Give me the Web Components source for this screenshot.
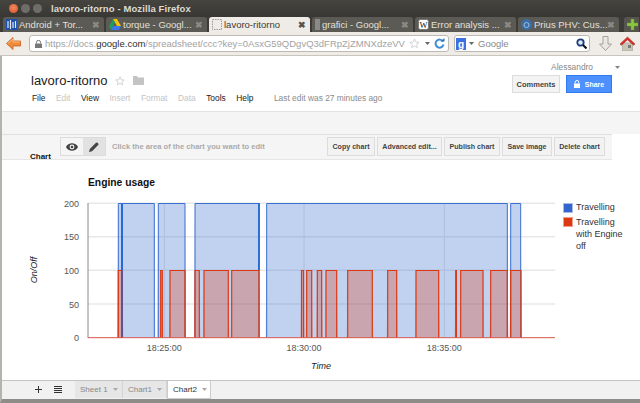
<!DOCTYPE html>
<html>
<head>
<meta charset="utf-8">
<title>lavoro-ritorno</title>
<style>
  html, body { margin: 0; padding: 0; width: 640px; height: 403px; overflow: hidden; background: #fff; font-family: "Liberation Sans", Arial, sans-serif; }
  body { display: flex; flex-direction: column; }
</style>
</head>
<body>
<window-title>lavoro-ritorno - Mozilla Firefox</window-title>
<tab-strip>
  <browser-tab label="Android + Tor...">
    <svg slot="icon" width="11" height="11" viewBox="0 0 11 11"><rect width="11" height="11" fill="#1d4fa8"/><path d="M2 2v7M4.500 1v9M7 3v6M9.500 2v7" stroke="#dfeaf8" stroke-width="1.200"/></svg>
  </browser-tab>
  <browser-tab label="torque - Googl...">
    <svg slot="icon" width="12" height="11" viewBox="0 0 12 11"><path d="M4 0h4l4 7H8z" fill="#f4c20d"/><path d="M4 0l2 3.600L2 11 0 7z" fill="#1f9e5a"/><path d="M4 7h8l-2 4H2z" fill="#3b78e7"/></svg>
  </browser-tab>
  <browser-tab active label="lavoro-ritorno">
    <svg slot="icon" width="10" height="11" viewBox="0 0 10 11"><rect x=".5" y=".5" width="9" height="10" fill="none" stroke="#999" stroke-dasharray="1.500 1"/></svg>
  </browser-tab>
  <browser-tab label="grafici - Googl...">
    <svg slot="icon" width="5" height="11" viewBox="0 0 5 11"><rect width="5" height="11" fill="#8a8a86"/></svg>
  </browser-tab>
  <browser-tab label="Error analysis ...">
    <svg slot="icon" width="11" height="11" viewBox="0 0 11 11"><rect x=".5" y=".5" width="10" height="10" rx="2" fill="#fff" stroke="#777"/><text x="5.500" y="8.500" font-family="Liberation Serif, serif" font-size="8.500" text-anchor="middle" fill="#111">W</text></svg>
  </browser-tab>
  <browser-tab label="Prius PHV: Cus...">
    <svg slot="icon" width="11" height="11" viewBox="0 0 11 11"><circle cx="5.500" cy="5.500" r="5.500" fill="#3b6ea5"/><circle cx="5.500" cy="6" r="2.500" fill="none" stroke="#9cc0e4"/></svg>
  </browser-tab>
  <svg class="plus" slot="plus" width="11" height="11" viewBox="0 0 11 11"><path d="M4 0h3v4h4v3H7v4H4V7H0V4h4z" fill="#8cc63f" stroke="#6a9a2c" stroke-width=".5"/></svg>
</tab-strip>
<nav-bar></nav-bar>
<doc-page>
  <doc-header></doc-header>
  <grey-band></grey-band>
  <chart-toolbar></chart-toolbar>
  <chart-view></chart-view>
  <sheet-bar></sheet-bar>
</doc-page>
<script>
class WindowTitle extends HTMLElement {
  constructor() {
    super();
    this.attachShadow({mode: 'open'}).innerHTML = `
      <style>
        :host { display: flex; align-items: center; height: 17px; flex: none; background: linear-gradient(#45443f, #383733); color: #dfdbd2; font: bold 8.500px "Liberation Sans", sans-serif; padding-left: 9px; }
        .b { width: 9px; height: 9px; border-radius: 50%; margin-right: 3px; background: #6e6d68; }
        .b.x { background: radial-gradient(circle at 50% 40%, #f08a5a, #d9512c); }
        .t { margin-left: 6px; font-size: 9.500px; letter-spacing: .1px; }
      </style>
      <span class="b x"></span><span class="b"></span><span class="b"></span>
      <span class="t"><slot></slot></span>`;
  }
}

class TabStrip extends HTMLElement {
  constructor() {
    super();
    this.attachShadow({mode: 'open'}).innerHTML = `
      <style>
        :host { display: flex; align-items: flex-end; gap: 2px; height: 15px; flex: none; background: #3c3b37; padding-left: 3px; position: relative; }
        .p { display: flex; align-items: center; margin-left: 3px; width: 15px; height: 15px; background: #55544f; border-radius: 3px 0 0 0; padding-left: 3px; box-sizing: border-box; }
      </style>
      <slot></slot><span class="p"><slot name="plus"></slot></span>`;
  }
}

class BrowserTab extends HTMLElement {
  constructor() {
    super();
    this.attachShadow({mode: 'open'}).innerHTML = `
      <style>
        :host { display: flex; align-items: center; width: 101px; height: 15px; box-sizing: border-box; background: #5b5a55; color: #e3e0d9; font: 9.500px "Liberation Sans", sans-serif; padding: 0 4px 0 3px; border-radius: 3px 3px 0 0; white-space: nowrap; overflow: hidden; }
        :host([active]) { background: #efebe7; color: #3c3b37; }
        .l { margin-left: 2px; flex: 1; overflow: hidden; }
        .x { font-weight: bold; color: #8b8a85; font-size: 9px; }
        :host([active]) .x { color: #55544f; }
      </style>
      <slot name="icon"></slot><span class="l"></span><span class="x">&#10006;</span>`;
    this.shadowRoot.querySelector('.l').textContent = this.getAttribute('label');
  }
}

class NavBar extends HTMLElement {
  constructor() {
    super();
    this.attachShadow({mode: 'open'}).innerHTML = `
      <style>
        :host { display: flex; align-items: center; height: 24px; flex: none; box-sizing: border-box; background: #efebe7; border-bottom: 1px solid #c8c5bf; padding: 0 3px 0 6px; font: 9.500px "Liberation Sans", sans-serif; color: #a2a2a2; }
        .box { display: flex; align-items: center; height: 15px; background: #fff; border: 1px solid #bdb9b2; border-radius: 3px; box-sizing: content-box; }
        .url { width: 418px; margin-left: 8px; overflow: hidden; white-space: nowrap; }
        .url .addr { flex: 1; overflow: hidden; margin-left: 3px; }
        .addr b { font-weight: normal; color: #2e2e2e; }
        .search { width: 134px; margin-left: 5px; }
        .search span { flex: 1; margin-left: 4px; color: #8a8a8a; }
        svg { flex: none; }
        .dl { margin-left: 9px; }
        .home { margin-left: 8px; }
      </style>
      <svg width="15" height="13" viewBox="0 0 15 13"><path d="M7 .5L.5 6.500 7 12.500V9h7.500V4H7z" fill="#ee8a3a" stroke="#c9601c" stroke-width=".8"/><path d="M2 6.500L7 2v3h7" fill="none" stroke="#fbd3a6" stroke-width=".7"/></svg>
      <div class="box url">
        <svg style="margin-left:5px" width="7" height="8" viewBox="0 0 7 8"><path d="M1.500 3.500V2.300a2 2 0 0 1 4 0v1.200" fill="none" stroke="#777"/><rect y="3.500" width="7" height="4.500" rx=".5" fill="#777"/></svg>
        <span class="addr">https://docs.<b>google.com</b>/spreadsheet/ccc?key=0AsxG59QDgvQ3dFRpZjZMNXdzeVV</span>
        <svg width="11" height="11" viewBox="0 0 24 24" style="margin-left:2px"><path d="M12 2l3 7 7 .6-5.300 4.600 1.600 7-6.300-3.800-6.300 3.800 1.600-7L1.600 9.600 9 9z" fill="#fff" stroke="#c2c2c2" stroke-width="1.500"/></svg>
        <svg width="5" height="3" viewBox="0 0 5 3" style="margin:0 4px 0 5px"><path d="M0 0h5L2.500 3z" fill="#666"/></svg>
        <svg width="11" height="11" viewBox="0 0 11 11" style="margin-right:3px"><path d="M9 3.500A4 4 0 1 0 9.500 6.500" fill="none" stroke="#3f8fd6" stroke-width="2"/><path d="M6.500 3.500h4V0z" fill="#2d73b8"/></svg>
      </div>
      <div class="box search">
        <svg style="margin-left:1px" width="10" height="12" viewBox="0 0 10 12"><rect width="10" height="12" fill="#3d6fe0"/><text x="5" y="9.500" font-family="Liberation Sans, sans-serif" font-weight="bold" font-size="10" text-anchor="middle" fill="#fff">g</text></svg>
        <svg width="5" height="3" viewBox="0 0 5 3" style="margin-left:3px"><path d="M0 0h5L2.500 3z" fill="#666"/></svg>
        <span>Google</span>
        <svg width="11" height="11" viewBox="0 0 11 11" style="margin-right:2px"><circle cx="4.500" cy="4.500" r="3.200" fill="#dfe8f5" stroke="#1d3d7a" stroke-width="1.800"/><path d="M7 7l3.500 3.500" stroke="#111" stroke-width="2"/></svg>
      </div>
      <svg class="dl" width="13" height="15" viewBox="0 0 13 15"><path d="M4 .5h5V8h3.500l-6 6.500-6-6.500H4z" fill="#e9e7e3" stroke="#a3a19c"/></svg>
      <svg class="home" width="15" height="15" viewBox="0 0 15 15"><rect x="2.500" y="7" width="10" height="8" fill="#c9c4b8" stroke="#9b968b" stroke-width=".5"/><rect x="8" y="9" width="3" height="3" fill="#7f7a70"/><path d="M7.500 1L0 8l1.500 1.200 6-5.400 6 5.400L15 8z" fill="#d8312c" stroke="#a81f1b" stroke-width=".5"/></svg>`;
  }
}

class DocPage extends HTMLElement {
  constructor() {
    super();
    this.attachShadow({mode: 'open'}).innerHTML = `
      <style>
        :host { display: flex; flex-direction: column; flex: 1; min-height: 0; background: #fff; border-left: 2px solid #b5b3ae; border-bottom: 4px solid #8d8c88; box-sizing: border-box; }
      </style>
      <slot></slot>`;
  }
}

class DocHeader extends HTMLElement {
  constructor() {
    super();
    this.attachShadow({mode: 'open'}).innerHTML = `
      <style>
        :host { display: flex; justify-content: space-between; flex: none; height: 55px; box-sizing: border-box; font-family: "Liberation Sans", sans-serif; position: relative; }
        .left { padding: 16px 0 0 29px; }
        .title { display: flex; align-items: center; font-size: 13px; line-height: 17px; color: #222; }
        .title svg { margin-left: 7px; }
        .menu { display: flex; gap: 10.500px; font-size: 8.400px; line-height: 10px; margin-top: 4px; padding-left: 1px; color: #222; }
        .menu i { font-style: normal; color: #c4c4c4; }
        .menu .last { margin-left: 10px; color: #8a8a8a; }
        .right { display: flex; flex-direction: column; align-items: flex-end; padding: 6px 28px 0 0; width: 110px; }
        .user { display: flex; align-items: center; font-size: 8.400px; line-height: 10px; color: #888; margin-right: -8px; }
        .user svg { margin-left: 22px; }
        .acts { display: flex; gap: 6px; margin-top: 3px; }
        .btn { display: flex; align-items: center; justify-content: center; height: 18px; font-size: 7.500px; font-weight: bold; box-sizing: border-box; }
        .c { width: 48px; color: #444; background: #f3f3f3; border: 1px solid #dcdcdc; }
        .s { width: 46px; color: #fff; background: #4d90fe; border: 1px solid #3079ed; gap: 5px; font-size: 7px; }
      </style>
      <div class="left">
        <div class="title"><span>lavoro-ritorno</span>
          <svg width="10" height="10" viewBox="0 0 24 24"><path d="M12 2l3 7 7 .6-5.300 4.600 1.600 7-6.300-3.800-6.300 3.800 1.600-7L1.600 9.600 9 9z" fill="#fff" stroke="#ccc" stroke-width="2"/></svg>
          <svg style="margin-left:8px" width="11" height="9" viewBox="0 0 11 9"><path d="M0 0h4l1 1.500h6V9H0z" fill="#c4c4c4"/></svg>
        </div>
        <div class="menu"><span>File</span><i>Edit</i><span>View</span><i>Insert</i><i>Format</i><i>Data</i><span>Tools</span><span>Help</span><span class="last">Last edit was 27 minutes ago</span></div>
      </div>
      <div class="right">
        <div class="user"><span>Alessandro</span><svg width="5" height="3" viewBox="0 0 5 3"><path d="M0 0h5L2.500 3z" fill="#888"/></svg></div>
        <div class="acts">
          <div class="btn c">Comments</div>
          <div class="btn s"><svg width="6" height="8" viewBox="0 0 6 8"><path d="M1.200 3.500V2.300a1.800 1.800 0 0 1 3.600 0v1.200" fill="none" stroke="#fff"/><rect y="3.500" width="6" height="4.500" fill="#fff"/></svg><span>Share</span></div>
        </div>
      </div>`;
  }
}

class GreyBand extends HTMLElement {
  constructor() {
    super();
    this.attachShadow({mode: 'open'}).innerHTML = `
      <style>
        :host { display: block; flex: none; height: 23px; box-sizing: border-box; background: #f5f5f5; border-top: 1px solid #e3e3e3; }
      </style>`;
  }
}

class ChartToolbar extends HTMLElement {
  constructor() {
    super();
    this.attachShadow({mode: 'open'}).innerHTML = `
      <style>
        :host { display: flex; align-items: flex-start; flex: none; width: 610px; height: 26px; box-sizing: border-box; background: #f5f5f5; border-top: 1px solid #e0e0e0; border-bottom: 1px solid #e6e6e6; font: bold 7.100px "Liberation Sans", sans-serif; padding-top: 2px; position: relative; }
        .name { width: 58px; margin-top: 15px; padding-left: 28px; box-sizing: border-box; color: #111; line-height: 9px; font-size: 8px; }
        .tog { display: flex; margin-left: 0; height: 19px; border: 1px solid #dcdcdc; box-sizing: border-box; }
        .tog span { display: flex; align-items: center; justify-content: center; width: 22px; }
        .tog .on { background: #e2e2e2; }
        .hint { flex: 1; color: #ababab; margin-left: 6px; line-height: 19px; font-size: 7.600px; }
        .acts { display: flex; gap: 2px; margin-right: 7px; }
        .acts span { display: flex; align-items: center; justify-content: center; height: 19px; box-sizing: border-box; color: #444; background: #f2f2f2; border: 1px solid #dcdcdc; }
      </style>
      <div class="name">Chart</div>
      <div class="tog">
        <span><svg width="12" height="8" viewBox="0 0 12 8"><path d="M0 4c2-5 10-5 12 0-2 5-10 5-12 0z" fill="#444"/><circle cx="6" cy="4" r="2.400" fill="#f5f5f5"/><circle cx="6" cy="4" r="1.300" fill="#444"/></svg></span>
        <span class="on"><svg width="10" height="10" viewBox="0 0 10 10"><path d="M0 10l.8-3L7 .8a1 1 0 0 1 1.400 0l.8.8a1 1 0 0 1 0 1.400L3 9.200z" fill="#444"/></svg></span>
      </div>
      <div class="hint">Click the area of the chart you want to edit</div>
      <div class="acts">
        <span style="width:48px">Copy chart</span>
        <span style="width:65px">Advanced edit...</span>
        <span style="width:56px">Publish chart</span>
        <span style="width:50px">Save image</span>
        <span style="width:51px">Delete chart</span>
      </div>`;
  }
}

// x ranges read off the reference, in page pixels
const blueRuns = [[118.3, 121.6], [122.4, 154.3], [158.3, 185], [195, 259], [266.7, 507.3], [510.7, 520.7]];
const redRuns = [[118.3, 122.3], [160.7, 162.3], [170, 185], [195, 199.3], [204, 228.3], [231.7, 259], [301.5, 303.5], [306.7, 311.7], [317.3, 321.7], [326, 336.7], [347.7, 372.3], [387.7, 396.7], [416, 438.7], [455.7, 456.4], [460.7, 483], [490.7, 507.3], [510.7, 521]];

function runShape(runs, top, fill, stroke, width) {
  const base = 337.7;
  return runs.map(r => {
    const pts = `${r[0] - 1},${base} ${r[0]},${top} ${r[1]},${top} ${r[1] + 1},${base}`;
    return `<polygon points="${pts}" fill="${fill}" stroke="none"/><polyline points="${r[0]},${base} ${r[0]},${top} ${r[1]},${top} ${r[1]},${base}" fill="none" stroke="${stroke}" stroke-width="${width}"/>`;
  }).join('');
}

class ChartView extends HTMLElement {
  constructor() {
    super();
    const grid = [203.3, 236.7, 270.3, 304].map(y => `<line x1="88" x2="555" y1="${y}" y2="${y}" stroke="#e8e8e8" stroke-width="1.500"/>`).join('');
    const vert = [164.3, 304, 444.3].map(x => `<line x1="${x}" x2="${x}" y1="203" y2="338" stroke="#e4e4e4"/>`).join('');
    const yLabels = [[200, 206.500], [150, 240], [100, 273.500], [50, 307.500], [0, 341]].map(l => `<text x="79" y="${l[1]}" text-anchor="end">${l[0]}</text>`).join('');
    const xLabels = [[164.300, '18:25:00'], [304, '18:30:00'], [444.300, '18:35:00']].map(l => `<text x="${l[0]}" y="351" text-anchor="middle">${l[1]}</text>`).join('');
    this.attachShadow({mode: 'open'}).innerHTML = `
      <style>
        :host { display: block; flex: 1; min-height: 0; }
        svg { display: block; font-family: "Liberation Sans", sans-serif; font-size: 9px; fill: #555; }
      </style>
      <svg width="638" height="220" viewBox="2 160 638 220">
        <text x="88" y="186" font-size="10.300" font-weight="bold" fill="#111">Engine usage</text>
        ${grid}${vert}
        ${runShape(blueRuns, 203.5, 'rgba(51,102,204,.3)', '#3a6fd0', 1)}
        ${runShape(redRuns, 270.5, 'rgba(220,60,20,.29)', '#dc3912', 1.2)}
        <line x1="122" x2="122" y1="203" y2="338" stroke="#1a5fd0" stroke-width="1.200"/>
        <line x1="259" x2="259" y1="203" y2="270" stroke="#1a5fd0" stroke-width="1.600"/>
        <line x1="88" x2="88" y1="203" y2="338" stroke="#8a8a8a"/>
        <line x1="88" x2="555" y1="337.700" y2="337.700" stroke="#d8574a"/>
        ${yLabels}${xLabels}
        <text transform="translate(37 270) rotate(-90)" text-anchor="middle" font-style="italic" fill="#222">On/Off</text>
        <text x="321" y="369" text-anchor="middle" font-style="italic" fill="#222">Time</text>
        <rect x="563.500" y="203.500" width="9" height="9" fill="#3366cc" stroke="#a9bdec"/>
        <rect x="563.500" y="217.500" width="9" height="9" fill="#dc3912" stroke="#f0a08c"/>
        <g fill="#333">
          <text x="576" y="210">Travelling</text>
          <text x="576" y="225">Travelling</text>
          <text x="576" y="237">with Engine</text>
          <text x="576" y="249">off</text>
        </g>
      </svg>`;
  }
}

class SheetBar extends HTMLElement {
  constructor() {
    super();
    this.attachShadow({mode: 'open'}).innerHTML = `
      <style>
        :host { display: flex; align-items: flex-start; flex: none; height: 19px; box-sizing: border-box; background: #f1f1f1; border-top: 1px solid #c4c4c4; font: 8px "Liberation Sans", sans-serif; color: #888; padding-left: 27px; }
        .ctl { display: flex; align-items: center; justify-content: center; height: 17px; width: 19px; color: #333; }
        .gap { width: 8px; }
        .t { display: flex; align-items: center; gap: 5px; height: 17px; box-sizing: border-box; padding-left: 5px; background: #e6e6e6; border-right: 1px solid #d4d4d4; }
        .t.on { background: #fff; color: #333; border: 1px solid #ccc; border-top: 0; height: 18px; }
      </style>
      <div class="ctl"><svg width="7" height="7" viewBox="0 0 7 7"><path d="M3 0h1v3h3v1H4v3H3V4H0V3h3z" fill="#333"/></svg></div>
      <div class="ctl"><svg width="8" height="7" viewBox="0 0 8 7"><path d="M0 .5h8M0 2.500h8M0 4.500h8M0 6.500h8" stroke="#333"/></svg></div>
      <div class="gap"></div>
      <div class="t" style="width:48px"><span>Sheet 1</span><svg width="5" height="3" viewBox="0 0 5 3"><path d="M0 0h5L2.500 3z" fill="#aaa"/></svg></div>
      <div class="t" style="width:44px"><span>Chart1</span><svg width="5" height="3" viewBox="0 0 5 3"><path d="M0 0h5L2.500 3z" fill="#aaa"/></svg></div>
      <div class="t on" style="width:44px"><span>Chart2</span><svg width="5" height="3" viewBox="0 0 5 3"><path d="M0 0h5L2.500 3z" fill="#aaa"/></svg></div>`;
  }
}

customElements.define('window-title', WindowTitle);
customElements.define('tab-strip', TabStrip);
customElements.define('browser-tab', BrowserTab);
customElements.define('nav-bar', NavBar);
customElements.define('doc-page', DocPage);
customElements.define('doc-header', DocHeader);
customElements.define('grey-band', GreyBand);
customElements.define('chart-toolbar', ChartToolbar);
customElements.define('chart-view', ChartView);
customElements.define('sheet-bar', SheetBar);
</script>
</body>
</html>
